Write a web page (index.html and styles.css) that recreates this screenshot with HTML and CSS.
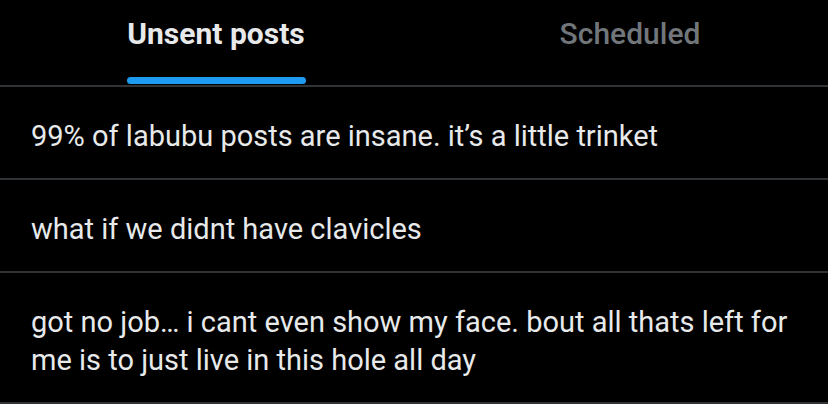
FILE: index.html
```html
<!DOCTYPE html>
<html lang="en">
<head>
<meta charset="utf-8">
<link rel="stylesheet" href="styles.css">
</head>
<body>
<div class="screen">
  <header class="tabbar">
    <nav class="tabs">
      <div class="tab tab-active"><span class="tab-label">Unsent posts</span><span class="tab-indicator"></span></div>
      <div class="tab"><span class="tab-label">Scheduled</span></div>
    </nav>
  </header>
  <ul class="posts">
    <li class="post">99% of labubu posts are insane. it’s a little trinket</li>
    <li class="post">what if we didnt have clavicles</li>
    <li class="post">got no job… i cant even show my face. bout all thats left for me is to just live in this hole all day</li>
  </ul>
</div>
</body>
</html>
```
FILE: styles.css
```css
html, body {
  margin: 0;
  padding: 0;
  background: #000;
  overflow: hidden;
}
.screen {
  width: 828px;
  height: 404px;
  background: #000;
  font-family: "Roboto", "Noto Sans", sans-serif;
  color: #e7e9ea;
  overflow: hidden;
}
.tabbar {
  border-bottom: 2px solid #2f3336;
}
.tabs {
  display: grid;
  grid-template-columns: 414px 414px;
  margin-left: 9px;
  height: 85px;
  width: 819px;
}
.tab {
  position: relative;
  display: flex;
  justify-content: center;
  padding-top: 16px;
}
.tab-label {
  font-size: 30px;
  font-weight: 500;
  color: #71767b;
  line-height: 36px;
}
.tab-active .tab-label {
  color: #e7e9ea;
  font-weight: 700;
}
.tab-indicator {
  position: absolute;
  left: 118px;
  width: 179px;
  bottom: 1px;
  height: 7px;
  border-radius: 4px;
  background: #1d9bf0;
}
.posts {
  list-style: none;
  margin: 0;
  padding: 0;
}
.post {
  padding: 30px 30px 23px 31px;
  font-size: 29px;
  line-height: 38px;
  border-bottom: 2px solid #2f3336;
}
```
